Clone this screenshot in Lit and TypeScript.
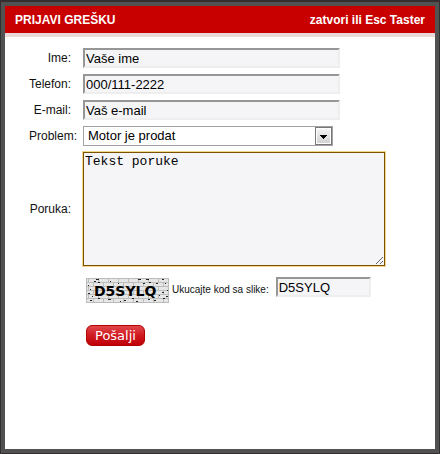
import { LitElement, html, svg, css } from "lit";
import { customElement } from "lit/decorators.js";

// Dark specks scattered over the captcha: [x, y, width]
const SPECKS: [number, number, number][] = [
  [10, 1, 3], [52, 1, 3], [60, 1, 3], [76, 1, 2], [24, 3, 1], [8, 3, 2], [12, 4, 2], [63, 4, 2],
  [32, 5, 1], [57, 5, 2], [70, 5, 2], [79, 5, 1], [2, 7, 1], [4, 11, 1],
  [81, 12, 1], [76, 14, 2], [2, 15, 2], [6, 18, 1], [80, 18, 2], [12, 20, 2], [22, 21, 3], [4, 22, 2],
  [38, 22, 2], [46, 20, 2], [62, 21, 2], [68, 22, 2], [77, 20, 2], [34, 23, 1], [73, 17, 1], [50, 23, 2],
];

@customElement("captcha-image")
export class CaptchaImage extends LitElement {
  static styles = css`
    :host { display: block; flex: none; }
    svg { display: block; }
    text { font: bold 14px "DejaVu Sans", sans-serif; fill: #000; }
  `;

  render() {
    return html`
      <svg width="83" height="25" viewBox="0 0 83 25" role="img" aria-label="Kod D5SYLQ">
        <defs>
          <pattern id="bricks" width="10" height="8" patternUnits="userSpaceOnUse">
            <rect width="10" height="8" fill="#e6e6e6" />
            <rect y="0" width="10" height="1" fill="#bdbdbd" />
            <rect y="4" width="10" height="1" fill="#bdbdbd" />
            <rect x="2" y="0" width="1" height="4" fill="#bdbdbd" />
            <rect x="7" y="4" width="1" height="4" fill="#bdbdbd" />
          </pattern>
        </defs>
        <rect width="83" height="25" fill="url(#bricks)" />
        <rect x="0.5" y="0.5" width="82" height="24" fill="none" stroke="#bbb" />
        ${SPECKS.map(([x, y, w]) => svg`<rect x=${x} y=${y} width=${w} height="1" fill="#222" />`)}
        <text x="8" y="18">D5SYLQ</text>
      </svg>
    `;
  }
}

@customElement("app-root")
export class AppRoot extends LitElement {
  static styles = css`
    :host {
      display: flex;
      box-sizing: border-box;
      min-height: 100vh;
      padding: 2px 1px 1px;
      background: #332e30;
      font: 12px/16px "Liberation Sans", Arial, sans-serif;
      color: #111;
    }
    .dialog {
      flex: 1;
      min-width: 0;
      border: 4px solid #515151;
      background: #fff;
    }
    header {
      display: flex;
      justify-content: space-between;
      align-items: center;
      padding: 6px 10px 5px;
      background: #c80000;
      border-bottom: 4px solid #e9d9d9;
      font-weight: bold;
      color: #fff;
    }
    h1 { margin: 0; font-size: 12px; }
    header a { color: #fff; text-decoration: none; }
    form {
      display: grid;
      grid-template-columns: 66px minmax(0, 302px);
      column-gap: 12px;
      row-gap: 6px;
      align-items: center;
      padding: 11px 0;
    }
    label { white-space: nowrap; }
    .label { justify-self: end; }
    .wide { margin-right: -6px; }
    input, select, textarea, button {
      box-sizing: border-box;
      margin: 0;
      font: 13px/16px "Liberation Sans", Arial, sans-serif;
      color: #000;
    }
    input {
      width: 100%;
      max-width: 257px;
      height: 20px;
      padding: 1px;
      border: 2px solid;
      border-color: #969696 #eee #eee #969696;
      background: #f5f5f8;
    }
    .select {
      display: grid;
      max-width: 250px;
    }
    .select > * { grid-area: 1 / 1; }
    select {
      appearance: none;
      width: 100%;
      height: 20px;
      padding: 0 20px 0 4px;
      border: 1px solid #a5a0a5;
      border-radius: 0;
      background: #fff;
    }
    .arrow {
      justify-self: end;
      align-self: center;
      pointer-events: none;
    }
    textarea {
      display: block;
      width: 100%;
      height: 114px;
      padding: 1px;
      border: 1px solid #7a5200;
      outline: 1px solid #f3d68c;
      background: #f5f5f8;
      font-family: "Liberation Mono", "Courier New", monospace;
    }
    .check {
      grid-column: 2;
      display: flex;
      align-items: flex-end;
      padding: 5px 0 0 3px;
    }
    .check captcha-image { margin-top: 1px; }
    .check label {
      align-self: center;
      margin: 0 7px 0 3px;
      font-size: 10px;
    }
    .check input {
      width: 95px;
      align-self: flex-start;
    }
    button {
      grid-column: 2;
      justify-self: start;
      margin: 16px 0 0 3px;
      height: 21px;
      padding: 0 8px;
      border: 1px solid #b30000;
      border-radius: 6px;
      background: linear-gradient(#e0484c, #d01a20 50%, #c00008);
      font-family: "DejaVu Sans", Verdana, sans-serif;
      color: #fff;
    }
  `;

  render() {
    return html`
      <section class="dialog" role="dialog" aria-labelledby="title">
        <header>
          <h1 id="title">PRIJAVI GREŠKU</h1>
          <a href="#">zatvori ili Esc Taster</a>
        </header>
        <form @submit=${(e: Event) => e.preventDefault()}>
          <label class="label" for="name">Ime:</label>
          <input id="name" type="text" value="Vaše ime" />
          <label class="label" for="phone">Telefon:</label>
          <input id="phone" type="tel" value="000/111-2222" />
          <label class="label" for="email">E-mail:</label>
          <input id="email" type="text" value="Vaš e-mail" />
          <label class="label wide" for="problem">Problem:</label>
          <div class="select">
            <select id="problem"><option>Motor je prodat</option></select>
            <svg class="arrow" width="18" height="18" viewBox="0 0 18 18" aria-hidden="true">
              <defs>
                <linearGradient id="face" x1="0" y1="0" x2="0" y2="1">
                  <stop offset="0" stop-color="#f4f4f4" />
                  <stop offset="1" stop-color="#d2d2d2" />
                </linearGradient>
              </defs>
              <rect x="0.5" y="0.5" width="16" height="17" fill="#fff" stroke="#777" />
              <rect x="2" y="2" width="13" height="14" fill="url(#face)" />
              <path d="M5 8h7v1h-1v1h-1v1h-1v1h-1v-1h-1v-1h-1v-1h-1z" fill="#000" />
            </svg>
          </div>
          <label class="label" for="message">Poruka:</label>
          <textarea id="message">Tekst poruke</textarea>
          <div class="check">
            <captcha-image></captcha-image>
            <label for="code">Ukucajte kod sa slike:</label>
            <input id="code" type="text" value="D5SYLQ" />
          </div>
          <button type="submit">Pošalji</button>
        </form>
      </section>
    `;
  }
}
